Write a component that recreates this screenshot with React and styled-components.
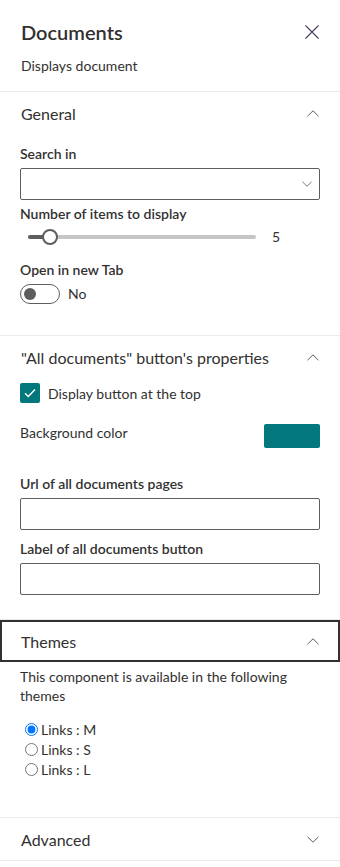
import React from "react";
import styled, { createGlobalStyle, css } from "styled-components";

const GlobalStyle = createGlobalStyle`
  html, body { margin: 0; padding: 0; background: #ffffff; }
  body { font-family: Lato, "Liberation Sans", sans-serif; color: #323130; }
  * { box-sizing: border-box; }
`;

const Pane = styled.aside`
  width: 340px;
  background: #ffffff;
  font-family: Lato, "Liberation Sans", sans-serif;
  color: #323130;
`;

const Header = styled.header`
  padding: 18px 20px 15px 21px;
  border-bottom: 1px solid #edebe9;
`;

const TitleRow = styled.div`
  display: flex;
  align-items: center;
  justify-content: space-between;
  height: 28px;
`;

const Title = styled.h2`
  margin: 0;
  font-size: 20px;
  font-weight: 600;
  line-height: 28px;
`;

const CloseButton = styled.button`
  width: 14px;
  height: 14px;
  padding: 0;
  margin-right: 1px;
  border: none;
  background: transparent;
  display: flex;
  align-items: center;
  justify-content: center;
  cursor: pointer;
`;

const Description = styled.p`
  margin: 10px 0 0;
  font-size: 14px;
  line-height: 20px;
`;

const Group = styled.section`
  border-bottom: 1px solid #edebe9;
`;

const GroupHeader = styled.button`
  width: 100%;
  height: 42px;
  padding: 0 21px 0 21px;
  display: flex;
  align-items: center;
  justify-content: space-between;
  border: none;
  background: transparent;
  font-family: inherit;
  font-size: 16px;
  color: #323130;
  text-align: left;
  cursor: pointer;
  ${(p) =>
    p.$focused &&
    css`
      outline: 2px solid #323130;
      outline-offset: -2px;
    `}
`;

const GroupBody = styled.div`
  padding: ${(p) => p.$top}px 20px ${(p) => p.$bottom}px 20px;
`;

const FieldLabel = styled.label`
  display: block;
  margin: ${(p) => p.$top || 0}px 0 4px;
  font-size: 14px;
  font-weight: 600;
  line-height: 20px;
`;

const Dropdown = styled.div`
  height: 32px;
  border: 1px solid #605e5c;
  border-radius: 2px;
  display: flex;
  align-items: center;
  justify-content: flex-end;
  padding-right: 7px;
`;

const SliderRow = styled.div`
  display: flex;
  align-items: center;
  height: 18px;
`;

const SliderTrackArea = styled.div`
  position: relative;
  width: 244px;
  height: 18px;
  padding: 0 8px;
  display: flex;
  align-items: center;
`;

const SliderRail = styled.div`
  position: relative;
  flex: 1;
  height: 4px;
  border-radius: 4px;
  background: #c8c6c4;
`;

const SliderFill = styled.div`
  position: absolute;
  left: 0;
  top: 0;
  height: 4px;
  border-radius: 4px;
  background: #605e5c;
`;

const SliderThumb = styled.span`
  position: absolute;
  top: 50%;
  width: 16px;
  height: 16px;
  margin: -8px 0 0 -8px;
  border-radius: 50%;
  border: 2px solid #605e5c;
  background: #ffffff;
`;

const SliderValue = styled.span`
  margin-left: 8px;
  font-size: 14px;
  line-height: 18px;
  color: #323130;
`;

const ToggleRow = styled.div`
  display: flex;
  align-items: center;
  height: 20px;
  gap: 8px;
`;

const ToggleTrack = styled.span`
  width: 40px;
  height: 20px;
  border: 1px solid #605e5c;
  border-radius: 10px;
  display: flex;
  align-items: center;
  padding: 0 3px;
`;

const ToggleKnob = styled.span`
  width: 12px;
  height: 12px;
  border-radius: 50%;
  background: #605e5c;
`;

const ToggleText = styled.span`
  font-size: 14px;
  line-height: 20px;
`;

const CheckRow = styled.label`
  display: flex;
  align-items: center;
  gap: 8px;
  height: 20px;
  font-size: 14px;
`;

const CheckBox = styled.span`
  width: 20px;
  height: 20px;
  border-radius: 2px;
  background: #03787c;
  display: flex;
  align-items: center;
  justify-content: center;
`;

const ColorRow = styled.div`
  margin-top: 21px;
  display: flex;
  align-items: flex-start;
  justify-content: space-between;
`;

const PlainLabel = styled.span`
  font-size: 14px;
  line-height: 18px;
`;

const Swatch = styled.span`
  width: 56px;
  height: 24px;
  border-radius: 2px;
  background: ${(p) => p.$color};
`;

const TextField = styled.input`
  display: block;
  width: 100%;
  height: 32px;
  border: 1px solid #605e5c;
  border-radius: 2px;
  padding: 0 8px;
  font-family: inherit;
  font-size: 14px;
  outline: none;
`;

const InfoText = styled.p`
  margin: 0;
  font-size: 14px;
  line-height: 19px;
`;

const RadioList = styled.div`
  margin-top: 14px;
  display: flex;
  flex-direction: column;
`;

const RadioOption = styled.label`
  display: flex;
  align-items: center;
  height: 20px;
  font-size: 14px;
  color: #323130;
  input {
    margin: 0 3px 0 5px;
    width: 13px;
    height: 13px;
  }
`;

const Chevron = ({ up, size = 12, color = "#605e5c" }) => (
  <svg width={size} height={size / 2 + 1} viewBox="0 0 12 7" fill="none">
    <path
      d={up ? "M0.5 6.2 L6 0.8 L11.5 6.2" : "M0.5 0.8 L6 6.2 L11.5 0.8"}
      stroke={color}
      strokeWidth="1"
    />
  </svg>
);

export default function App() {
  return (
    <Pane>
      <GlobalStyle />
      <Header>
        <TitleRow>
          <Title>Documents</Title>
          <CloseButton aria-label="Close">
            <svg width="14" height="14" viewBox="0 0 14 14" fill="none">
              <path d="M0.5 0.5 L13.5 13.5 M13.5 0.5 L0.5 13.5" stroke="#4b3d63" strokeWidth="1.1" />
            </svg>
          </CloseButton>
        </TitleRow>
        <Description>Displays document</Description>
      </Header>

      <Group>
        <GroupHeader>
          General
          <Chevron up />
        </GroupHeader>
        <GroupBody $top={10} $bottom={31}>
          <FieldLabel>Search in</FieldLabel>
          <Dropdown>
            <Chevron size={10} color="#605e5c" />
          </Dropdown>
          <FieldLabel $top={4}>Number of items to display</FieldLabel>
          <SliderRow>
            <SliderTrackArea>
              <SliderRail>
                <SliderFill style={{ width: "22px" }} />
                <SliderThumb style={{ left: "22px" }} />
              </SliderRail>
            </SliderTrackArea>
            <SliderValue>5</SliderValue>
          </SliderRow>
          <FieldLabel $top={14}>Open in new Tab</FieldLabel>
          <ToggleRow>
            <ToggleTrack>
              <ToggleKnob />
            </ToggleTrack>
            <ToggleText>No</ToggleText>
          </ToggleRow>
        </GroupBody>
      </Group>

      <Group>
        <GroupHeader>
          "All documents" button's properties
          <Chevron up />
        </GroupHeader>
        <GroupBody $top={5} $bottom={24}>
          <CheckRow>
            <CheckBox>
              <svg width="12" height="10" viewBox="0 0 12 10" fill="none">
                <path d="M1 5.2 L4.3 8.4 L11 1.4" stroke="#ffffff" strokeWidth="1.4" />
              </svg>
            </CheckBox>
            Display button at the top
          </CheckRow>
          <ColorRow>
            <PlainLabel>Background color</PlainLabel>
            <Swatch $color="#03787c" />
          </ColorRow>
          <FieldLabel $top={26}>Url of all documents pages</FieldLabel>
          <TextField />
          <FieldLabel $top={9}>Label of all documents button</FieldLabel>
          <TextField />
        </GroupBody>
      </Group>

      <Group>
        <GroupHeader $focused>
          Themes
          <Chevron up />
        </GroupHeader>
        <GroupBody $top={5} $bottom={38}>
          <InfoText>This component is available in the following themes</InfoText>
          <RadioList>
            <RadioOption>
              <input type="radio" name="theme" defaultChecked />
              Links : M
            </RadioOption>
            <RadioOption>
              <input type="radio" name="theme" />
              Links : S
            </RadioOption>
            <RadioOption>
              <input type="radio" name="theme" />
              Links : L
            </RadioOption>
          </RadioList>
        </GroupBody>
      </Group>

      <Group>
        <GroupHeader>
          Advanced
          <Chevron />
        </GroupHeader>
      </Group>
    </Pane>
  );
}
